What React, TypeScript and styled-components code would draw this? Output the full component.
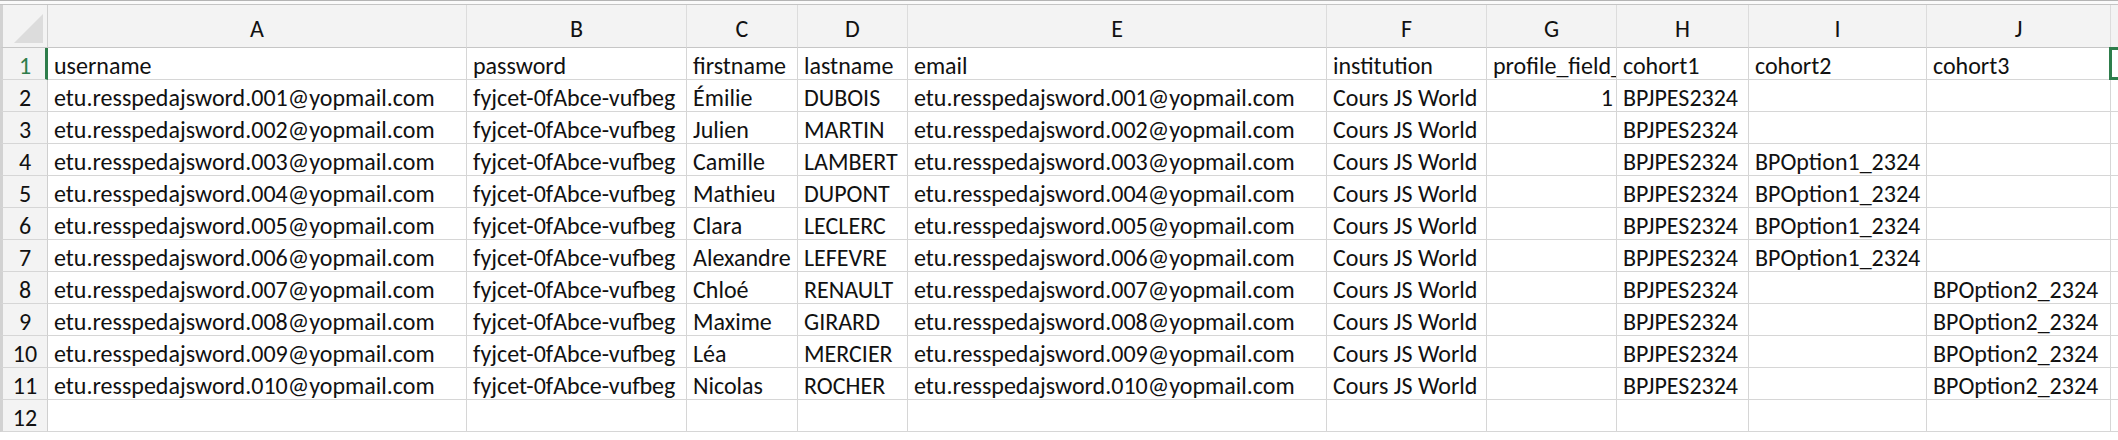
import React from "react";
import styled, { createGlobalStyle } from "styled-components";

const GlobalStyle = createGlobalStyle`
  html, body {
    margin: 0;
    padding: 0;
    background: #ffffff;
    overflow: hidden;
  }
  body {
    font-family: Carlito, Lato, "Liberation Sans", sans-serif;
  }
`;

const COLS = [419, 220, 111, 110, 419, 160, 130, 132, 178, 184];
const LETTERS = ["A", "B", "C", "D", "E", "F", "G", "H", "I", "J"];

const Window = styled.div`
  width: 2118px;
  height: 440px;
  overflow: hidden;
  background: #ffffff;
  display: flex;
  flex-direction: column;
`;

const TopEdge = styled.div`
  height: 5px;
  box-sizing: border-box;
  border-top: 1px solid #b4b4b4;
  border-bottom: 1px solid #c4c4c4;
  background: #fafafa;
`;

const Grid = styled.div`
  display: grid;
  grid-template-columns: 48px ${COLS.map((c) => `${c}px`).join(" ")} 1fr;
  grid-auto-rows: 32px;
  grid-template-rows: 43px;
  font-size: 24px;
  color: #111111;
`;

const Corner = styled.div`
  position: relative;
  box-sizing: border-box;
  background: #f3f3f3;
  border-right: 1px solid #cfcfcf;
  border-bottom: 1px solid #c6c6c6;
  border-left: 3px solid #d2d2d2;
`;

const CornerTriangle = styled.div`
  position: absolute;
  right: 4px;
  bottom: 4px;
  width: 29px;
  height: 29px;
  background: #dcdcdc;
  clip-path: polygon(100% 0, 100% 100%, 0 100%);
`;

const ColHeader = styled.div`
  box-sizing: border-box;
  background: #f3f3f3;
  border-right: 1px solid #dcdcdc;
  border-bottom: 1px solid #c6c6c6;
  display: flex;
  align-items: flex-end;
  justify-content: center;
  padding-bottom: 6px;
  line-height: 24px;
  color: #111111;
`;

const RowHeader = styled.div<{ $active?: boolean }>`
  box-sizing: border-box;
  background: #f3f3f3;
  border-left: 3px solid #d2d2d2;
  border-right: ${(p) => (p.$active ? "3px solid #2e7d4b" : "1px solid #cfcfcf")};
  border-bottom: 1px solid #d6d6d6;
  display: flex;
  align-items: flex-end;
  justify-content: center;
  padding-bottom: 1px;
  padding-left: ${(p) => (p.$active ? "2px" : "0")};
  line-height: 24px;
  color: ${(p) => (p.$active ? "#2e7d4b" : "#111111")};
`;

const Cell = styled.div<{ $align?: "left" | "right" }>`
  box-sizing: border-box;
  border-right: 1px solid #d6d6d6;
  border-bottom: 1px solid #d6d6d6;
  display: flex;
  align-items: flex-end;
  justify-content: ${(p) => (p.$align === "right" ? "flex-end" : "flex-start")};
  padding: 0 3px 1px 6px;
  line-height: 24px;
  white-space: nowrap;
  overflow: hidden;
`;

const ActiveCell = styled.div`
  box-sizing: border-box;
  border-bottom: 1px solid #d6d6d6;
  display: flex;
`;

const ActiveFrame = styled.div`
  box-sizing: border-box;
  flex: 1;
  margin-left: -2px;
  margin-top: -1px;
  margin-bottom: -1px;
  border: 3px solid #2e7d4b;
`;

type Row = (string | number)[];

const header: Row = [
  "username",
  "password",
  "firstname",
  "lastname",
  "email",
  "institution",
  "profile_field_",
  "cohort1",
  "cohort2",
  "cohort3",
];

const people = [
  ["Émilie", "DUBOIS"],
  ["Julien", "MARTIN"],
  ["Camille", "LAMBERT"],
  ["Mathieu", "DUPONT"],
  ["Clara", "LECLERC"],
  ["Alexandre", "LEFEVRE"],
  ["Chloé", "RENAULT"],
  ["Maxime", "GIRARD"],
  ["Léa", "MERCIER"],
  ["Nicolas", "ROCHER"],
];

const rows: Row[] = people.map(([first, last], i) => {
  const n = String(i + 1).padStart(3, "0");
  const mail = `etu.resspedajsword.${n}@yopmail.com`;
  const c2 = i >= 2 && i <= 5 ? "BPOption1_2324" : "";
  const c3 = i >= 6 ? "BPOption2_2324" : "";
  return [
    mail,
    "fyjcet-0fAbce-vufbeg",
    first,
    last,
    mail,
    "Cours JS World",
    i === 0 ? 1 : "",
    "BPJPES2324",
    c2,
    c3,
  ];
});

export default function App() {
  const all: Row[] = [header, ...rows, ["", "", "", "", "", "", "", "", "", ""]];
  return (
    <Window>
      <GlobalStyle />
      <TopEdge />
      <Grid>
        <Corner>
          <CornerTriangle />
        </Corner>
        {LETTERS.map((l) => (
          <ColHeader key={l}>{l}</ColHeader>
        ))}
        <ColHeader />
        {all.map((row, r) => (
          <React.Fragment key={r}>
            <RowHeader $active={r === 0}>{r + 1}</RowHeader>
            {row.map((v, c) => (
              <Cell key={c} $align={typeof v === "number" ? "right" : "left"}>
                {v}
              </Cell>
            ))}
            {r === 0 ? (
              <ActiveCell>
                <ActiveFrame />
              </ActiveCell>
            ) : (
              <Cell />
            )}
          </React.Fragment>
        ))}
      </Grid>
    </Window>
  );
}
